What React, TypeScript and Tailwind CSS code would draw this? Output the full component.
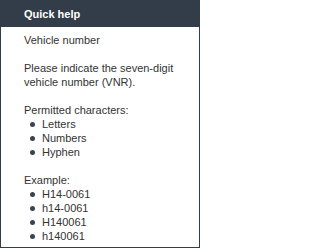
const permitted = ["Letters", "Numbers", "Hyphen"];
const examples = ["H14-0061", "h14-0061", "H140061", "h140061"];

function Bullets({ items }: { items: string[] }) {
  return (
    <ul>
      {items.map((item) => (
        <li key={item} className="flex items-center h-[14px]">
          <span className="ml-[6px] mr-[7px] w-[5px] h-[5px] rounded-full bg-[#3a4350]" />
          <span>{item}</span>
        </li>
      ))}
    </ul>
  );
}

export default function App() {
  return (
    <div
      className="w-[200px] h-[248px] flex flex-col bg-white border border-[#333d4a] border-t-0 text-[11px] leading-[14px] text-[#333]"
      style={{ fontFamily: '"Liberation Sans", Arial, sans-serif' }}
    >
      <div className="h-[27px] bg-[#333d4a] flex items-center px-[23px]">
        <span className="text-white font-bold text-[11px]">Quick help</span>
      </div>
      <div className="px-[23px] pt-[6px] flex flex-col gap-[14px]">
        <p>Vehicle number</p>
        <p>
          Please indicate the seven-digit
          <br />
          vehicle number (VNR).
        </p>
        <div>
          <p>Permitted characters:</p>
          <Bullets items={permitted} />
        </div>
        <div>
          <p>Example:</p>
          <Bullets items={examples} />
        </div>
      </div>
    </div>
  );
}
